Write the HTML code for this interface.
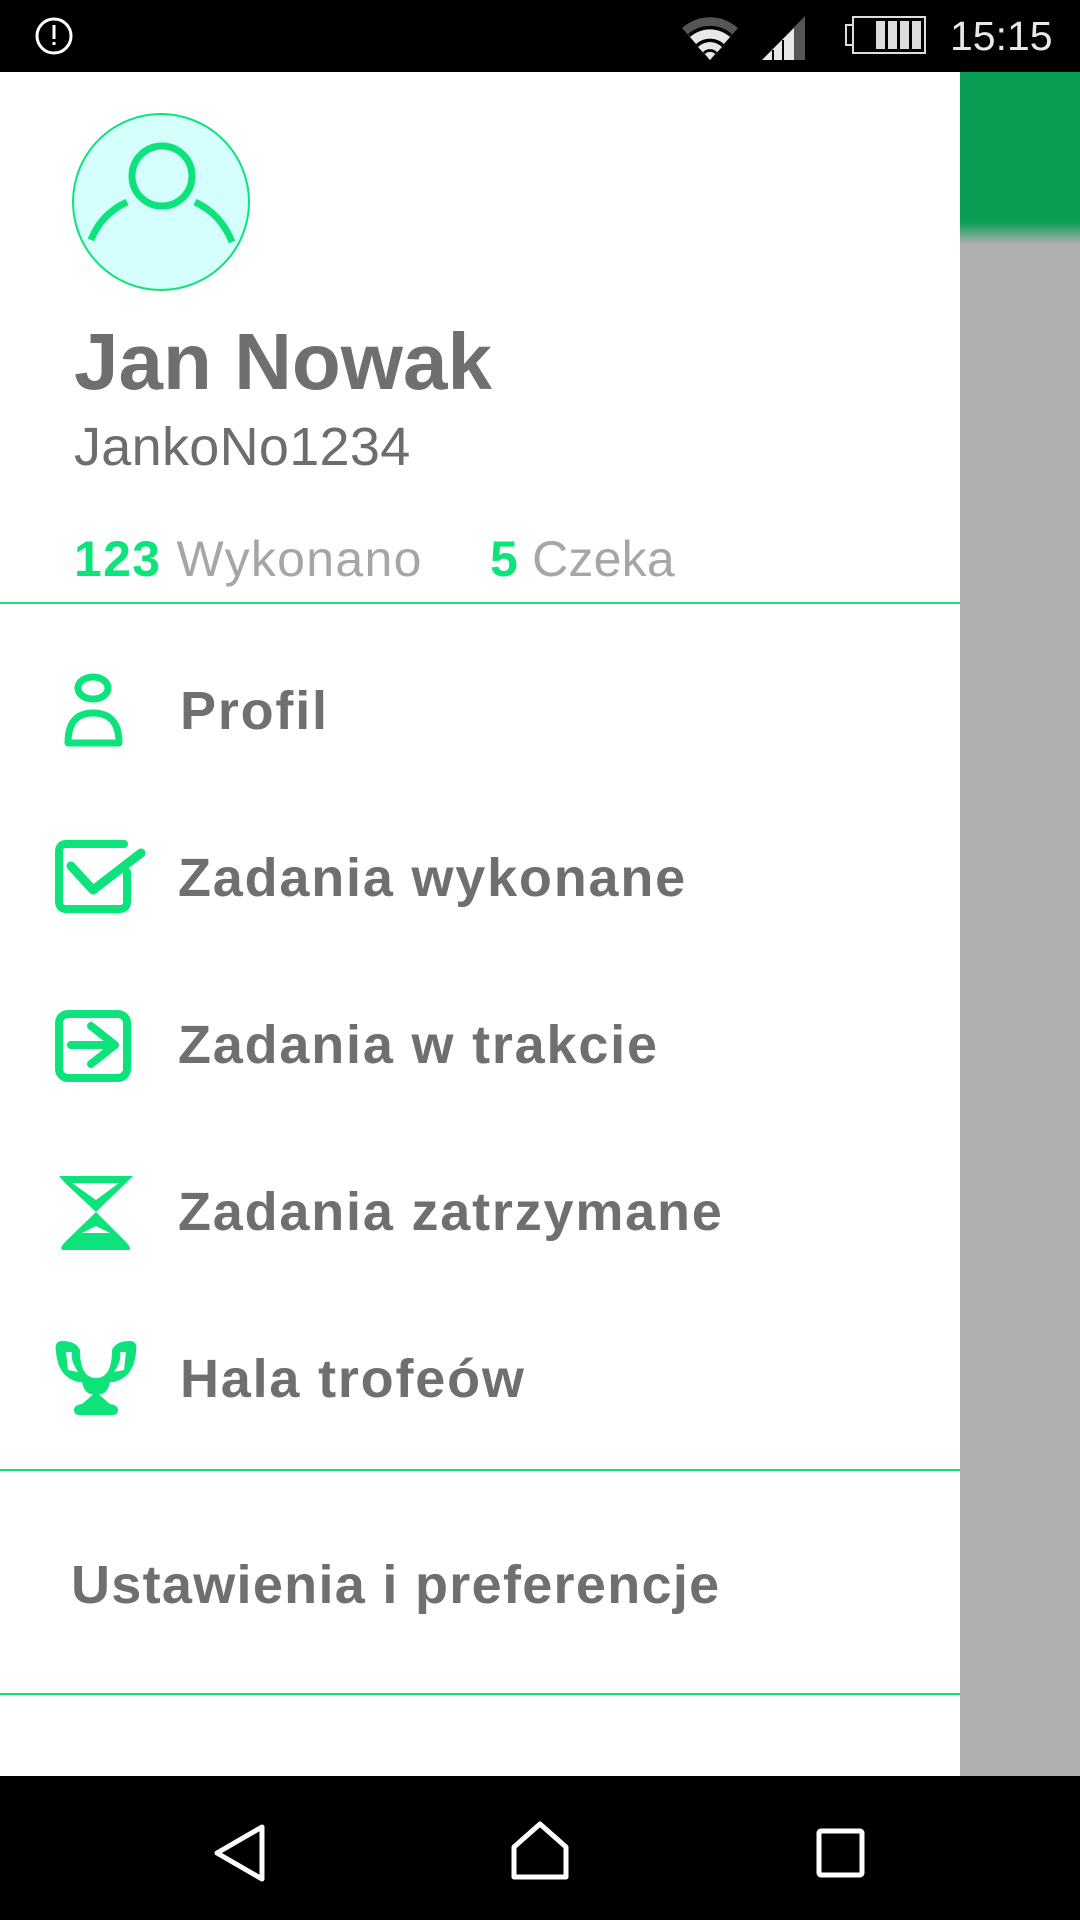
<!DOCTYPE html>
<html><head><meta charset="utf-8"><style>
*{margin:0;padding:0;box-sizing:border-box}
body{width:1080px;height:1920px;position:relative;overflow:hidden;background:#fff;font-family:"Liberation Sans",sans-serif}
.abs{position:absolute}
.t{position:absolute;white-space:nowrap;line-height:1}
.menu{font-weight:bold;color:#6f6f6f;font-size:54px;letter-spacing:1.8px}
.line{position:absolute;left:0;width:960px;height:2px;background:#0de37a}
</style></head><body>
<div class="abs" style="left:0;top:0;width:1080px;height:72px;background:#000"></div>
<svg class="abs" style="left:30px;top:0" width="50" height="72"><circle cx="24" cy="36" r="17" fill="none" stroke="#fff" stroke-width="3"/><rect x="22.5" y="25" width="3" height="14" fill="#fff"/><rect x="22.5" y="42" width="3" height="3" fill="#fff"/></svg>
<svg class="abs" style="left:680px;top:12px" width="60" height="52">
<path d="M30 48 L2 16 A42 42 0 0 1 58 16 Z" fill="#555"/>
<path d="M30 48 L8 22 A34 34 0 0 1 52 22 Z" fill="#000"/>
<path d="M30 48 L10 25 A30 30 0 0 1 50 25 Z" fill="#e8e8e8"/>
<path d="M30 48 L16 32 A21 21 0 0 1 44 32 Z" fill="#000"/>
<path d="M30 48 L18 35 A17 17 0 0 1 42 35 Z" fill="#e8e8e8"/>
<path d="M30 48 L23 40 A10 10 0 0 1 37 40 Z" fill="#000"/>
<path d="M30 48 L25 42 A7 7 0 0 1 35 42 Z" fill="#e8e8e8"/>
</svg>
<svg class="abs" style="left:760px;top:14px" width="50" height="48"><path d="M2 46 L45 2 L45 46Z" fill="#555"/><path d="M2 46 L34 14 L34 46Z" fill="#e8e8e8"/><path d="M12 36 L14 36 L14 46 L12 46Z M22 26 L24 26 L24 46 L22 46Z" fill="#000"/></svg>
<div class="abs" style="left:852px;top:16px;width:74px;height:38px;border:2px solid #ddd"></div>
<div class="abs" style="left:845px;top:24px;width:8px;height:22px;border:2px solid #ddd;border-right:none"></div>
<div class="abs" style="left:876px;top:21px;width:46px;height:28px;background:repeating-linear-gradient(90deg,#ddd 0 9px,#000 9px 12px)"></div>
<div class="t" style="left:950px;top:16px;font-size:41px;color:#e8e8e8">15:15</div>
<div class="abs" style="left:960px;top:72px;width:120px;height:1704px;background:#afafaf"></div>
<div class="abs" style="left:960px;top:72px;width:120px;height:172px;background:linear-gradient(#079e54 0,#079e54 150px,#afafaf 172px)"></div>
<svg class="abs" style="left:71px;top:112px" width="180" height="180"><circle cx="90" cy="90" r="88" fill="#d5fffc" stroke="#0de37a" stroke-width="2"/><circle cx="91" cy="64" r="30" fill="none" stroke="#0de37a" stroke-width="7"/><path d="M20 128 Q30 102 56 90" fill="none" stroke="#0de37a" stroke-width="7"/><path d="M124 90 Q150 102 161 130" fill="none" stroke="#0de37a" stroke-width="7"/></svg>
<div class="t" style="left:74px;top:322px;font-size:80px;font-weight:bold;color:#6f6f6f">Jan Nowak</div>
<div class="t" style="left:74px;top:420px;font-size:54px;color:#6d6d6d;letter-spacing:0.3px">JankoNo1234</div>
<div class="t" style="left:74px;top:534px;font-size:50px;color:#a6a6a6;letter-spacing:1.3px"><b style="color:#0de37a">123</b> Wykonano</div>
<div class="t" style="left:490px;top:534px;font-size:50px;color:#a6a6a6;letter-spacing:0.2px"><b style="color:#0de37a">5</b> Czeka</div>
<div class="line" style="top:602px"></div>
<svg class="abs" style="left:0;top:0" width="160" height="1440">
<g fill="none" stroke="#0de37a" stroke-linejoin="round" stroke-linecap="round">
<ellipse cx="93" cy="688" rx="15" ry="11" stroke-width="7"/>
<path d="M68 743 L119 743 Q119 713 93 713 Q68 713 68 743Z" stroke-width="7"/>
<path d="M124 844 L66 844 Q59 844 59 852 L59 901 Q59 909 66 909 L120 909 Q127 909 127 901 L127 872" stroke-width="8"/>
<path d="M71 866 L93 890 L141 853" stroke-width="9"/>
<rect x="59" y="1014" width="68" height="64" rx="9" stroke-width="8"/>
<path d="M71 1045 L115 1045 M91 1026 L115 1045 L91 1064" stroke-width="8"/>
</g>
<path d="M59 1176 L133 1176 L126 1183 L96 1212 L126 1242 Q133 1250 128 1250 L64 1250 Q58 1250 65 1242 L96 1212 L65 1183 Z" fill="#0de37a"/>
<path d="M72 1183 L119 1183 L96 1200 Z" fill="#fff"/>
<path d="M82 1233 L96 1226 L110 1233 Z" fill="#fff"/>
<path d="M62 1341 Q54 1341 56 1352 Q58 1377 78 1382 L82 1382 Q84 1395 96 1395 Q108 1395 110 1382 L114 1382 Q134 1377 136 1352 Q138 1341 130 1341 Q116 1341 112 1350 Q112 1378 96 1378 Q80 1378 80 1350 Q76 1341 62 1341Z" fill="#0de37a"/>
<path d="M96 1392 L82 1404 Q74 1405 74 1410 Q74 1415 80 1415 L112 1415 Q118 1415 118 1410 Q118 1405 110 1404Z" fill="#0de37a"/>
<path d="M66 1352 L68 1370 L78 1372 Q70 1360 72 1352Z" fill="#fff"/>
<path d="M126 1352 L124 1370 L114 1372 Q122 1360 120 1352Z" fill="#fff"/>
</svg>
<div class="t menu" style="left:180px;top:684px">Profil</div>
<div class="t menu" style="left:178px;top:851px">Zadania wykonane</div>
<div class="t menu" style="left:178px;top:1018px">Zadania w trakcie</div>
<div class="t menu" style="left:178px;top:1185px">Zadania zatrzymane</div>
<div class="t menu" style="left:180px;top:1352px">Hala trofeów</div>
<div class="line" style="top:1469px"></div>
<div class="t menu" style="left:71px;top:1558px;letter-spacing:1.3px">Ustawienia i preferencje</div>
<div class="line" style="top:1693px"></div>
<div class="abs" style="left:0;top:1776px;width:1080px;height:144px;background:#000"></div>
<svg class="abs" style="left:0;top:1776px" width="1080" height="144" fill="none" stroke="#fff" stroke-width="5" stroke-linejoin="round">
<path d="M262 51 L217 77 L262 103Z"/>
<path d="M514 101 L514 71 L540 48 L566 71 L566 101Z"/>
<rect x="819" y="55" width="43" height="44" rx="2"/>
</svg>
</body></html>
